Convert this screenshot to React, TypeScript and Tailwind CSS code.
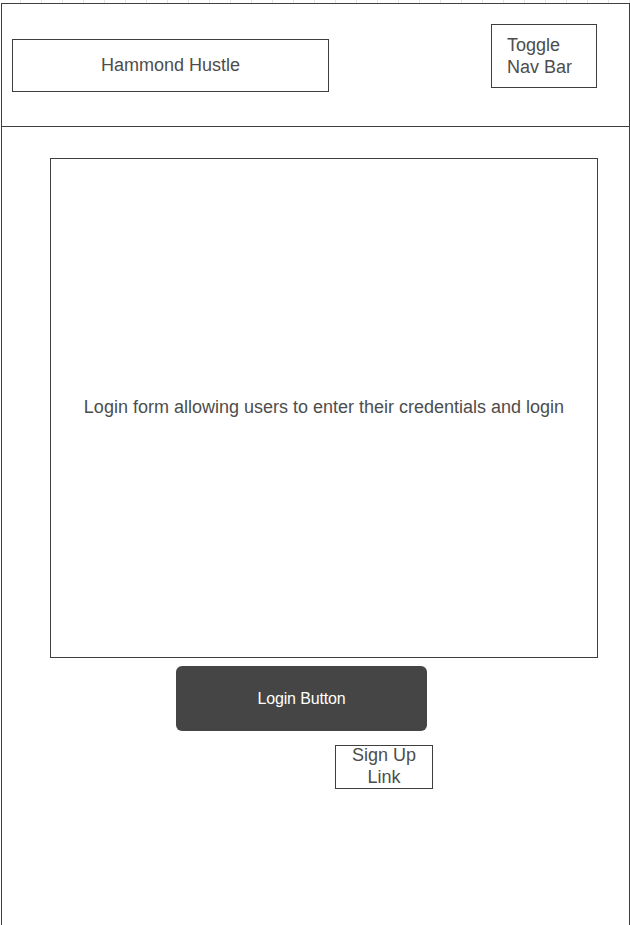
import React from "react";

export default function App() {
  return (
    <div className="relative w-[630px] h-[925px] bg-white overflow-hidden" style={{ fontFamily: '"Liberation Sans", Arial, sans-serif' }}>
      <div className="h-[3px] w-full bg-[repeating-linear-gradient(90deg,transparent_0_20px,#e4e4e4_20px_21px)]" />
      <div className="ml-[1px] w-[629px] h-[922px] border-t border-l border-r border-[#3f3f3f] flex flex-col text-[#4d4d4d]">
        <div className="h-[123px] border-b border-[#3f3f3f] flex items-start shrink-0">
          <div className="ml-[10px] mt-[35px] w-[317px] h-[53px] border border-[#3f3f3f] flex items-center justify-center pb-[2px] text-[18px] leading-[22px]">
            Hammond Hustle
          </div>
          <div className="ml-[162px] mt-[20px] w-[106px] h-[64px] border border-[#3f3f3f] flex items-center pl-[15px] text-[18px] leading-[22px]">
            <div>
              Toggle
              <br />
              Nav Bar
            </div>
          </div>
        </div>
        <div className="ml-[48px] mt-[31px] w-[548px] h-[500px] border border-[#3f3f3f] flex items-center justify-center pb-[2px] text-[18px] leading-[22px] shrink-0">
          Login form allowing users to enter their credentials and login
        </div>
        <div className="ml-[174px] mt-[8px] w-[251px] h-[65px] rounded-[6px] bg-[#454545] flex items-center justify-center text-white text-[16px] tracking-[-0.15px] shrink-0">
          Login Button
        </div>
        <div className="ml-[333px] mt-[14px] w-[98px] h-[44px] border border-[#3f3f3f] flex items-center justify-center pb-[2px] text-center text-[18px] leading-[22px] shrink-0">
          <div>
            Sign Up
            <br />
            Link
          </div>
        </div>
      </div>
    </div>
  );
}
